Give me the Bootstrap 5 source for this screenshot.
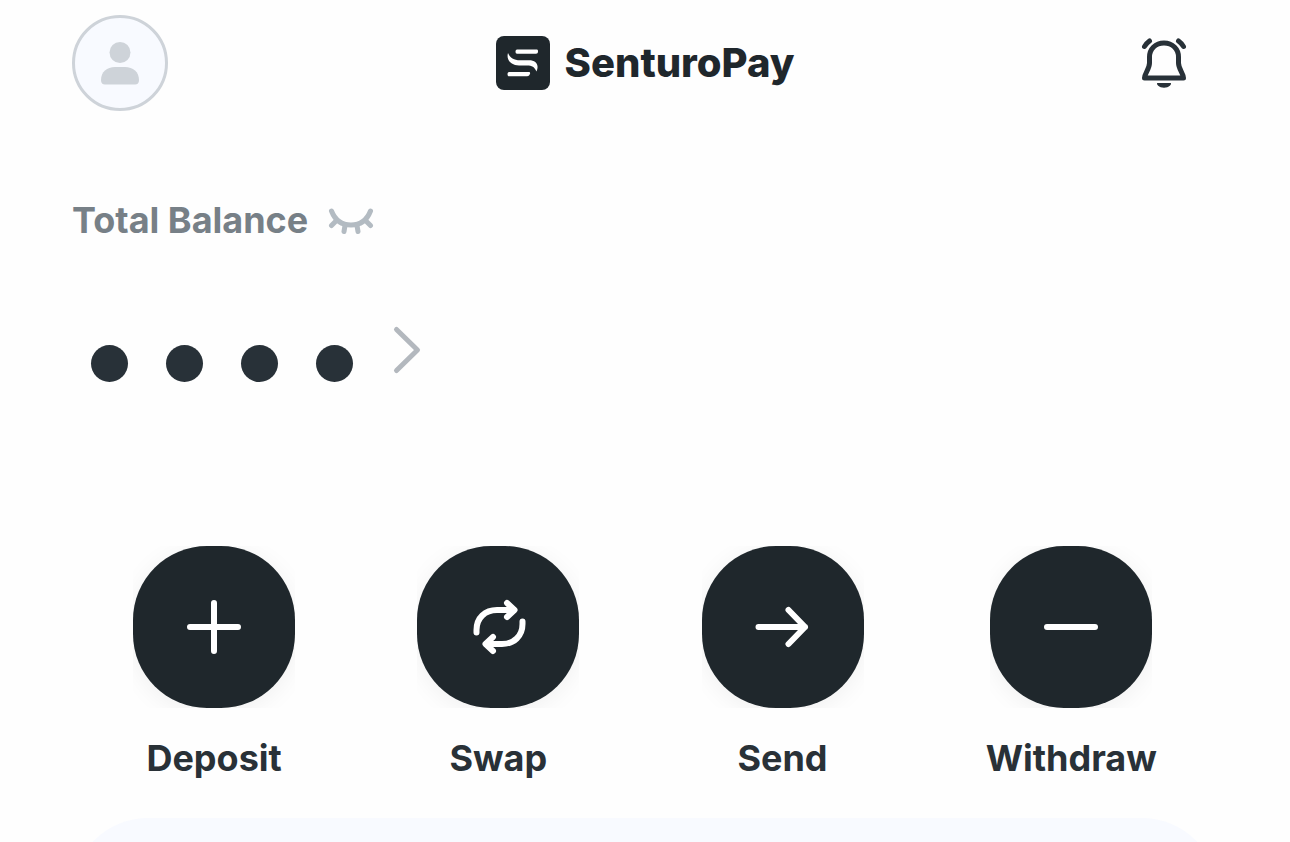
<!DOCTYPE html>
<html lang="en">
<head>
<meta charset="utf-8">
<meta name="viewport" content="width=device-width, initial-scale=1">
<title>SenturoPay</title>
<link href="https://cdn.jsdelivr.net/npm/bootstrap@5.3.0/dist/css/bootstrap.min.css" rel="stylesheet">
<style>
  :root { --ink: #1f272c; --ink-soft: #293137; --muted: #778087; --line: #ced3d9; --surface: #f8faff; }
  body { font-family: Inter, "Liberation Sans", sans-serif; color: var(--ink-soft); background: #fefefe; }
  .screen { padding: 15px 72px 0; }
  .avatar { width: 96px; height: 96px; border: 3px solid var(--line); background: var(--surface); }
  .brand { gap: 15px; color: var(--ink); font-size: 40px; font-weight: 800; line-height: 54px; }
  .bell { width: 108px; height: 96px; }
  .balance-head { margin-top: 85px; gap: 20px; font-size: 36px; font-weight: 700; line-height: 48px; color: var(--muted); }
  .balance-value { margin-top: 77px; padding-left: 19px; gap: 38px; height: 74px; }
  .mask-dot { width: 37px; height: 37px; background: #283138; }
  .dots { gap: 38px; padding-top: 24px; }
  .actions { margin-top: 151px; }
  .action { gap: 26px; font-size: 36px; font-weight: 700; line-height: 48px; color: var(--ink-soft); }
  .tile-clip { overflow: hidden; }
  .tile { width: 162px; height: 162px; border-radius: 74px; background: var(--ink); box-shadow: 0 4px 24px rgba(0, 0, 0, .06); }
  .panel { margin-top: 36px; height: 240px; border-radius: 76px 76px 0 0; background: var(--surface); }
</style>
</head>
<body>
<div class="screen vh-100 overflow-hidden d-flex flex-column">
  <header class="row g-0 align-items-center flex-shrink-0">
    <div class="col">
      <button type="button" class="avatar btn p-0 rounded-circle d-flex align-items-center justify-content-center" aria-label="Profile">
        <svg width="40" height="44" viewBox="0 0 40 44" fill="#ced3d9" aria-hidden="true">
          <circle cx="20" cy="11.500" r="10.500"/>
          <path d="M1 39C1 31 7 26 15 26H25C33 26 39 31 39 39C39 42 37.500 43.500 35 43.500H5C2.500 43.500 1 42 1 39Z"/>
        </svg>
      </button>
    </div>
    <a href="#" class="brand col-auto d-flex align-items-center text-decoration-none">
      <svg width="54" height="54" viewBox="0 0 54 54" aria-hidden="true">
        <rect width="54" height="54" rx="8" fill="#1f272c"/>
        <g fill="#fff">
          <path d="M21 13.500H41C42.500 13.500 42.500 17.800 40 17.800H21C19 17.800 19 13.500 21 13.500Z"/>
          <path d="M12 17C14 22 18 24.300 24 24.300H33C40 24.300 43.500 29 40.500 35.500C38.500 31 36 29.500 31 29.500H23C15 29.500 10 24 12 17Z"/>
          <path d="M13 36H33C35 36 34 40.300 31 40.300H13C11 40.300 11 36 13 36Z"/>
        </g>
      </svg>
      <span>SenturoPay</span>
    </a>
    <div class="col d-flex justify-content-end">
      <button type="button" class="bell btn p-0 border-0 d-flex align-items-center justify-content-center" aria-label="Notifications">
        <svg width="48" height="52" viewBox="0 0 48 52" fill="none" stroke="#283138" stroke-width="5" stroke-linecap="round" stroke-linejoin="round" aria-hidden="true">
          <path d="M24 6C15.500 6 9.500 12 9.500 20V26C9.500 32 4.500 36.500 4.500 41H43.500C43.500 36.500 38.500 32 38.500 26V20C38.500 12 32.500 6 24 6Z"/>
          <path d="M4.500 9.500C5.500 7.500 7.500 5.500 9.500 4M43.500 9.500C42.500 7.500 40.500 5.500 38.500 4"/>
          <path d="M17.500 46H30.500C31.500 46 31 47.500 30 48.500C27 51.500 21 51.500 18 48.500C17 47.500 16.500 46 17.500 46Z" fill="#283138" stroke="none"/>
        </svg>
      </button>
    </div>
  </header>

  <section class="flex-shrink-0">
    <div class="balance-head d-flex align-items-center">
      <span>Total Balance</span>
      <button type="button" class="btn p-0 border-0 d-flex" aria-label="Show balance">
        <svg width="46" height="28" viewBox="0 0 46 28" fill="none" stroke="#b3bbc2" stroke-width="5" stroke-linecap="round" aria-hidden="true">
          <path d="M3.500 5C7 14 14 19 23 19S39 14 42.500 5"/>
          <path d="M7.500 15.500L3.500 19.500M38.500 15.500L42.500 19.500M17 19.500L16 25.500M29 19.500L30 25.500"/>
        </svg>
      </button>
    </div>
    <div class="balance-value d-flex align-items-start">
      <div class="dots d-flex" role="img" aria-label="Balance hidden">
        <span class="mask-dot rounded-circle"></span>
        <span class="mask-dot rounded-circle"></span>
        <span class="mask-dot rounded-circle"></span>
        <span class="mask-dot rounded-circle"></span>
      </div>
      <button type="button" class="btn p-0 border-0 d-flex" aria-label="Balance details">
        <svg width="32" height="60" viewBox="0 0 32 60" fill="none" stroke="#b3b8be" stroke-width="5" stroke-linecap="round" stroke-linejoin="round" aria-hidden="true">
          <path d="M5.500 8.500L26.500 29L5.500 49.500"/>
        </svg>
      </button>
    </div>
  </section>

  <nav class="actions d-flex justify-content-around flex-shrink-0" aria-label="Actions">
    <button type="button" class="action btn p-0 border-0 d-flex flex-column align-items-center">
      <span class="tile-clip"><span class="tile d-flex align-items-center justify-content-center">
        <svg width="60" height="60" viewBox="0 0 60 60" fill="none" stroke="#fff" stroke-width="6" stroke-linecap="round" aria-hidden="true"><path d="M30 6V54M6 30H54"/></svg>
      </span></span>
      <span>Deposit</span>
    </button>
    <button type="button" class="action btn p-0 border-0 d-flex flex-column align-items-center">
      <span class="tile-clip"><span class="tile d-flex align-items-center justify-content-center">
        <svg width="60" height="60" viewBox="0 0 60 60" fill="none" stroke="#fff" stroke-width="6" stroke-linecap="round" stroke-linejoin="round" aria-hidden="true"><path d="M8.500 35.500V33C8.500 21 17 13 29 13H45M39 6L46.500 13L39 20"/><path d="M54.500 24.500V27C54.500 39 46 47 34 47H18M25 40L17.500 47L25 54"/></svg>
      </span></span>
      <span>Swap</span>
    </button>
    <button type="button" class="action btn p-0 border-0 d-flex flex-column align-items-center">
      <span class="tile-clip"><span class="tile d-flex align-items-center justify-content-center">
        <svg width="60" height="60" viewBox="0 0 60 60" fill="none" stroke="#fff" stroke-width="6" stroke-linecap="round" stroke-linejoin="round" aria-hidden="true"><path d="M5.500 30H52M35.500 13L52 30L35.500 47"/></svg>
      </span></span>
      <span>Send</span>
    </button>
    <button type="button" class="action btn p-0 border-0 d-flex flex-column align-items-center">
      <span class="tile-clip"><span class="tile d-flex align-items-center justify-content-center">
        <svg width="60" height="60" viewBox="0 0 60 60" fill="none" stroke="#fff" stroke-width="6" stroke-linecap="round" aria-hidden="true"><path d="M6 30H54"/></svg>
      </span></span>
      <span>Withdraw</span>
    </button>
  </nav>

  <section class="panel flex-shrink-0"></section>
</div>
<script src="https://cdn.jsdelivr.net/npm/bootstrap@5.3.0/dist/js/bootstrap.bundle.min.js"></script>
</body>
</html>
